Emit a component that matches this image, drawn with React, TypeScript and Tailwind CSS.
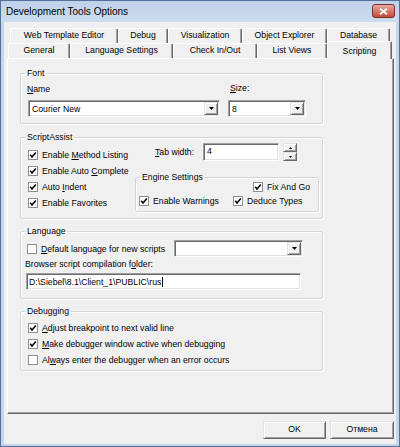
import React from "react";

const sunken =
  "border border-t-[#a0a0a0] border-l-[#a0a0a0] border-r-white border-b-white shadow-[inset_1px_1px_0_#696969,inset_-1px_-1px_0_#e3e3e3] bg-white";
const raised =
  "bg-[#f0f0f0] border border-t-[#e3e3e3] border-l-[#e3e3e3] border-r-[#696969] border-b-[#696969] shadow-[inset_1px_1px_0_#fff,inset_-1px_-1px_0_#a0a0a0]";
const group = "rounded-[2px] border border-[#d5d5d5] shadow-[inset_1px_1px_0_#fff,1px_1px_0_#fff]";

function U({ children }: { children: React.ReactNode }) {
  return <span className="underline decoration-1 underline-offset-[1px]">{children}</span>;
}

function Check({ checked }: { checked?: boolean }) {
  return (
    <span className="flex h-[10px] w-[10px] shrink-0 items-center justify-center border border-[#8e8f8f] bg-white">
      {checked ? (
        <svg width="8" height="8" viewBox="0 0 8 8">
          <path d="M1.2 3.8 L3 5.9 L6.8 1.5" fill="none" stroke="#000" strokeWidth="1.6" />
        </svg>
      ) : null}
    </span>
  );
}

function CheckRow({ checked, children, className = "" }: { checked?: boolean; children: React.ReactNode; className?: string }) {
  return (
    <div className={`flex items-center ${className}`}>
      <Check checked={checked} />
      <span className="ml-[4px] whitespace-nowrap leading-[10px]">{children}</span>
    </div>
  );
}

function DropBtn() {
  return (
    <span className={`flex h-full w-[14px] items-center justify-center ${raised}`}>
      <svg width="5" height="3" viewBox="0 0 5 3">
        <path d="M0 0h5L2.5 3z" fill="#000" />
      </svg>
    </span>
  );
}

function Combo({ value, className }: { value: string; className: string }) {
  return (
    <div className={`flex h-[17px] p-[1px] ${sunken} ${className}`}>
      <span className="flex flex-1 items-center pl-[2px] leading-[10px]">{value}</span>
      <DropBtn />
    </div>
  );
}

function Tab({ label, className }: { label: string; className: string }) {
  return (
    <div
      className={`flex h-[15px] items-center justify-center whitespace-nowrap rounded-t-[2px] border-t border-l border-r border-t-white border-l-white border-r-[#696969] bg-[#f0f0f0] shadow-[inset_-1px_0_0_#a0a0a0] ${className}`}
    >
      {label}
    </div>
  );
}

export default function App() {
  return (
    <div className="h-[447px] w-[400px] border border-[#55709a] bg-[#c4d6ec] font-['Liberation_Sans',Arial,sans-serif] text-[8.7px] text-black">
      <div className="flex h-[21px] items-center bg-gradient-to-b from-[#bfd2ea] to-[#cddcef] pl-[5px] pr-[4px]">
        <span className="flex-1 text-[10px]">Development Tools Options</span>
        <span className="mt-[3px] flex h-[14px] w-[23px] items-center justify-center self-start rounded-[3px] border border-[#7b2e25] bg-gradient-to-b from-[#e6a89d] to-[#c3493a]">
          <svg width="9" height="7" viewBox="0 0 9 7">
            <path d="M1 0.8 L8 6.2 M8 0.8 L1 6.2" stroke="#fff" strokeWidth="1.8" />
          </svg>
        </span>
      </div>

      <div className="mx-[3px] flex h-[422px] flex-col bg-[#f0f0f0]">
        <div className="ml-[6px] mt-[6px] flex">
          <Tab label="Web Template Editor" className="w-[108px]" />
          <Tab label="Debug" className="w-[50px]" />
          <Tab label="Visualization" className="w-[74px]" />
          <Tab label="Object Explorer" className="w-[85px]" />
          <Tab label="Database" className="w-[63px]" />
        </div>
        <div className="ml-[4px] flex h-[15px] items-end">
          <Tab label="General" className="w-[62px]" />
          <Tab label="Language Settings" className="w-[103px]" />
          <Tab label="Check In/Out" className="w-[84px]" />
          <Tab label="List Views" className="w-[70px]" />
          <Tab label="Scripting" className="relative z-10 -mb-[1px] h-[18px] w-[65px] items-start pt-[3px]" />
        </div>

        <div className="ml-[3px] h-[356px] w-[387px] border border-t-white border-l-white border-r-[#696969] border-b-[#696969] shadow-[inset_-1px_-1px_0_#a0a0a0]">
          {/* Font */}
          <fieldset className={`ml-[12px] mt-[9px] w-[303px] pb-[6px] ${group}`}>
            <legend className="ml-[4px] px-[2px] leading-[10px]">Font</legend>
            <div className="mt-[6px] flex">
              <div className="ml-[7px] w-[192px]">
                <div className="-ml-[1px] leading-[10px]">
                  <U>N</U>ame
                </div>
                <Combo value="Courier New" className="mt-[6px] w-[192px]" />
              </div>
              <div className="ml-[8px] w-[78px]">
                <div className="-mt-[1px] ml-[2px] leading-[10px]">
                  <U>S</U>ize:
                </div>
                <Combo value="8" className="mt-[7px] w-[78px]" />
              </div>
            </div>
          </fieldset>

          {/* ScriptAssist */}
          <fieldset className={`ml-[12px] mt-[8px] w-[303px] pb-[6px] ${group}`}>
            <legend className="ml-[4px] px-[2px] leading-[10px]">ScriptAssist</legend>
            <div className="flex">
              <div className="mt-[5px] w-[114px] pl-[7px]">
                <CheckRow checked className="h-[16px]">
                  Enable <U>M</U>ethod Listing
                </CheckRow>
                <CheckRow checked className="h-[16px]">
                  Enable Auto <U>C</U>omplete
                </CheckRow>
                <CheckRow checked className="h-[16px]">
                  Auto <U>I</U>ndent
                </CheckRow>
                <CheckRow checked className="h-[16px]">
                  Enable Favorites
                </CheckRow>
              </div>
              <div className="w-[184px]">
                <div className="mt-[1px] flex h-[18px] items-center">
                  <span className="ml-[20px] w-[48px] leading-[10px]">
                    <U>T</U>ab width:
                  </span>
                  <div className={`flex h-[18px] w-[76px] items-center pl-[3px] ${sunken}`}>4</div>
                  <div className="ml-[4px] flex h-[18px] w-[14px] flex-col">
                    <span className={`flex h-[9px] items-center justify-center ${raised}`}>
                      <svg width="3" height="2" viewBox="0 0 3 2">
                        <path d="M0 2h3L1.5 0z" fill="#000" />
                      </svg>
                    </span>
                    <span className={`flex h-[9px] items-center justify-center ${raised}`}>
                      <svg width="3" height="2" viewBox="0 0 3 2">
                        <path d="M0 0h3L1.5 2z" fill="#000" />
                      </svg>
                    </span>
                  </div>
                </div>
                <fieldset className={`mt-[11px] w-[184px] pb-[4px] ${group}`}>
                  <legend className="ml-[4px] px-[2px] leading-[10px]">Engine Settings</legend>
                  <CheckRow checked className="-mt-[1px] h-[12px] pl-[117px]">
                    Fix And Go
                  </CheckRow>
                  <div className="mt-[2px] flex h-[12px] items-center pl-[3px]">
                    <CheckRow checked className="w-[94px]">
                      Enable Warnings
                    </CheckRow>
                    <CheckRow checked>Deduce Types</CheckRow>
                  </div>
                </fieldset>
              </div>
            </div>
          </fieldset>

          {/* Language */}
          <fieldset className={`ml-[12px] mt-[7px] w-[303px] pb-[8px] ${group}`}>
            <legend className="ml-[4px] px-[2px] leading-[10px]">Language</legend>
            <div className="mt-[4px] flex h-[17px] items-center">
              <CheckRow className="w-[153px] pl-[6px]">
                <U>D</U>efault language for new scripts
              </CheckRow>
              <Combo value="" className="w-[129px]" />
            </div>
            <div className="mt-[2px] pl-[4px] leading-[10px]">
              Browser script compilation f<U>o</U>lder:
            </div>
            <div className={`ml-[5px] mt-[4px] flex h-[17px] w-[275px] items-center pl-[2px] ${sunken}`}>
              <span className="leading-[10px]">D:\Siebel\8.1\Client_1\PUBLIC\rus</span>
              <span className="ml-[1px] h-[10px] w-[1px] bg-black" />
            </div>
          </fieldset>

          {/* Debugging */}
          <fieldset className={`ml-[12px] mt-[7px] w-[303px] pb-[2px] ${group}`}>
            <legend className="ml-[4px] px-[2px] leading-[10px]">Debugging</legend>
            <div className="mt-[4px] pl-[7px]">
              <CheckRow checked className="h-[16px]">
                <U>A</U>djust breakpoint to next valid line
              </CheckRow>
              <CheckRow checked className="h-[16px]">
                <U>M</U>ake debugger window active when debugging
              </CheckRow>
              <CheckRow className="h-[16px]">
                Al<U>w</U>ays enter the debugger when an error occurs
              </CheckRow>
            </div>
          </fieldset>
        </div>

        <div className="mr-[2px] mt-[7px] flex justify-end gap-[4px]">
          <button className={`flex h-[18px] w-[63px] items-center justify-center ${raised}`}>OK</button>
          <button className={`flex h-[18px] w-[64px] items-center justify-center ${raised}`}>Отмена</button>
        </div>
      </div>
    </div>
  );
}
